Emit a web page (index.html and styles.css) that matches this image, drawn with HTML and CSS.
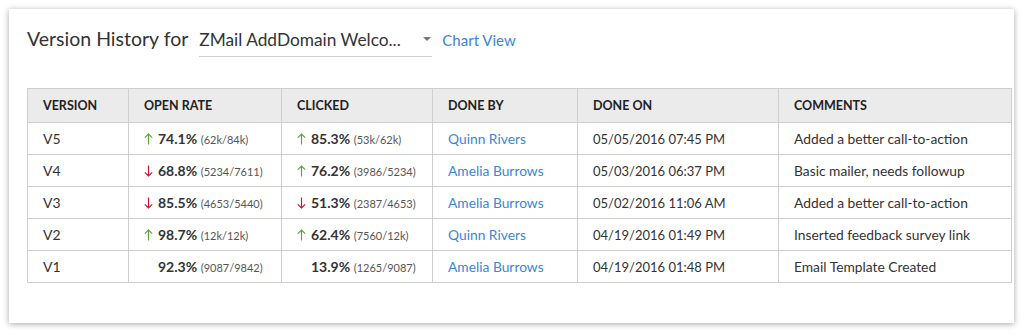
FILE: index.html
```html
<!DOCTYPE html>
<html>
<head>
<meta charset="utf-8">
<link rel="stylesheet" href="styles.css">
</head>
<body>
<div class="card">
  <div class="head">
    <span class="title">Version History for</span>
    <div class="select">
      <span class="select-text">ZMail AddDomain Welco...</span>
      <span class="caret"></span>
    </div>
    <a class="chart-link">Chart View</a>
  </div>
  <table class="grid">
    <colgroup>
      <col class="c1"><col class="c2"><col class="c3"><col class="c4"><col class="c5"><col class="c6">
    </colgroup>
    <thead>
      <tr><th>VERSION</th><th>OPEN RATE</th><th>CLICKED</th><th>DONE BY</th><th>DONE ON</th><th>COMMENTS</th></tr>
    </thead>
    <tbody>
      <tr>
        <td>V5</td>
        <td><span class="ar up"><svg viewBox="0 0 9 12"><path d="M4.5 11.5V1M0.8 4.7L4.5 1L8.2 4.7"/></svg></span><b>74.1%</b> <small>(62k/84k)</small></td>
        <td><span class="ar up"><svg viewBox="0 0 9 12"><path d="M4.5 11.5V1M0.8 4.7L4.5 1L8.2 4.7"/></svg></span><b>85.3%</b> <small>(53k/62k)</small></td>
        <td><a class="who">Quinn Rivers</a></td>
        <td class="date">05/05/2016 07:45 PM</td>
        <td>Added a better call-to-action</td>
      </tr>
      <tr>
        <td>V4</td>
        <td><span class="ar down"><svg viewBox="0 0 9 12"><path d="M4.5 0.5V11M0.8 7.3L4.5 11L8.2 7.3"/></svg></span><b>68.8%</b> <small>(5234/7611)</small></td>
        <td><span class="ar up"><svg viewBox="0 0 9 12"><path d="M4.5 11.5V1M0.8 4.7L4.5 1L8.2 4.7"/></svg></span><b>76.2%</b> <small>(3986/5234)</small></td>
        <td><a class="who">Amelia Burrows</a></td>
        <td class="date">05/03/2016 06:37 PM</td>
        <td>Basic mailer, needs followup</td>
      </tr>
      <tr>
        <td>V3</td>
        <td><span class="ar down"><svg viewBox="0 0 9 12"><path d="M4.5 0.5V11M0.8 7.3L4.5 11L8.2 7.3"/></svg></span><b>85.5%</b> <small>(4653/5440)</small></td>
        <td><span class="ar down"><svg viewBox="0 0 9 12"><path d="M4.5 0.5V11M0.8 7.3L4.5 11L8.2 7.3"/></svg></span><b>51.3%</b> <small>(2387/4653)</small></td>
        <td><a class="who">Amelia Burrows</a></td>
        <td class="date">05/02/2016 11:06 AM</td>
        <td>Added a better call-to-action</td>
      </tr>
      <tr>
        <td>V2</td>
        <td><span class="ar up"><svg viewBox="0 0 9 12"><path d="M4.5 11.5V1M0.8 4.7L4.5 1L8.2 4.7"/></svg></span><b>98.7%</b> <small>(12k/12k)</small></td>
        <td><span class="ar up"><svg viewBox="0 0 9 12"><path d="M4.5 11.5V1M0.8 4.7L4.5 1L8.2 4.7"/></svg></span><b>62.4%</b> <small>(7560/12k)</small></td>
        <td><a class="who">Quinn Rivers</a></td>
        <td class="date">04/19/2016 01:49 PM</td>
        <td>Inserted feedback survey link</td>
      </tr>
      <tr>
        <td>V1</td>
        <td><span class="ar"></span><b>92.3%</b> <small>(9087/9842)</small></td>
        <td><span class="ar"></span><b>13.9%</b> <small>(1265/9087)</small></td>
        <td><a class="who">Amelia Burrows</a></td>
        <td class="date">04/19/2016 01:48 PM</td>
        <td>Email Template Created</td>
      </tr>
    </tbody>
  </table>
</div>
</body>
</html>
```

FILE: styles.css
```css
* { box-sizing: border-box; }
html, body { margin: 0; padding: 0; background: #fff; }
body {
  font-family: Lato, "Liberation Sans", sans-serif;
  color: #333;
  width: 1024px;
  height: 334px;
  overflow: hidden;
}
.card {
  margin: 9px 0 0 9px;
  width: 1005px;
  height: 314px;
  background: #fff;
  box-shadow: 0 1px 6px rgba(0,0,0,0.35);
  padding: 11px 0 0 18px;
}
.head {
  display: flex;
  align-items: baseline;
  height: 68px;
  padding-top: 7px;
}
.title {
  font-size: 19.5px;
  color: #333;
}
.select {
  margin-left: 11px;
  width: 233px;
  display: flex;
  align-items: baseline;
  justify-content: space-between;
  border-bottom: 1px solid #d0d0d0;
  padding-bottom: 6px;
}
.select-text {
  font-size: 17.3px;
  color: #333;
}
.caret {
  width: 0; height: 0;
  border-left: 4.5px solid transparent;
  border-right: 4.5px solid transparent;
  border-top: 4.5px solid #777;
  margin-right: 1px;
  position: relative;
  top: -5px;
}
.chart-link {
  margin-left: 10px;
  font-size: 15px;
  color: #3a86d6;
}
.grid {
  border-collapse: collapse;
  table-layout: fixed;
  width: 984px;
  font-size: 13.8px;
}
.c1 { width: 101px; }
.c2 { width: 153px; }
.c3 { width: 151px; }
.c4 { width: 145px; }
.c5 { width: 201px; }
.c6 { width: 233px; }
.grid th, .grid td {
  border: 1px solid #cfcfcf;
  text-align: left;
  padding: 0 0 0 15px;
  white-space: nowrap;
  overflow: hidden;
}
.grid th {
  background: #ebebeb;
  height: 34px;
  font-size: 12.5px;
  font-weight: 700;
  color: #222;
}
.grid td {
  height: 32px;
  color: #333;
}
.grid td:first-child { font-size: 14px; }
.grid td.date { font-size: 13px; }
.grid b {
  font-weight: 700;
  font-size: 14px;
  color: #333;
}
.grid small {
  font-size: 11px;
  color: #555;
}
.ar {
  display: inline-block;
  width: 9px;
  height: 12px;
  margin-right: 5px;
  vertical-align: -1px;
}
.ar svg { width: 9px; height: 12px; display: block; fill: none; stroke-width: 1.1; }
.ar.up svg { stroke: #56a32e; }
.ar.down svg { stroke: #d0102a; }
.who { color: #3a86d6; }
```
